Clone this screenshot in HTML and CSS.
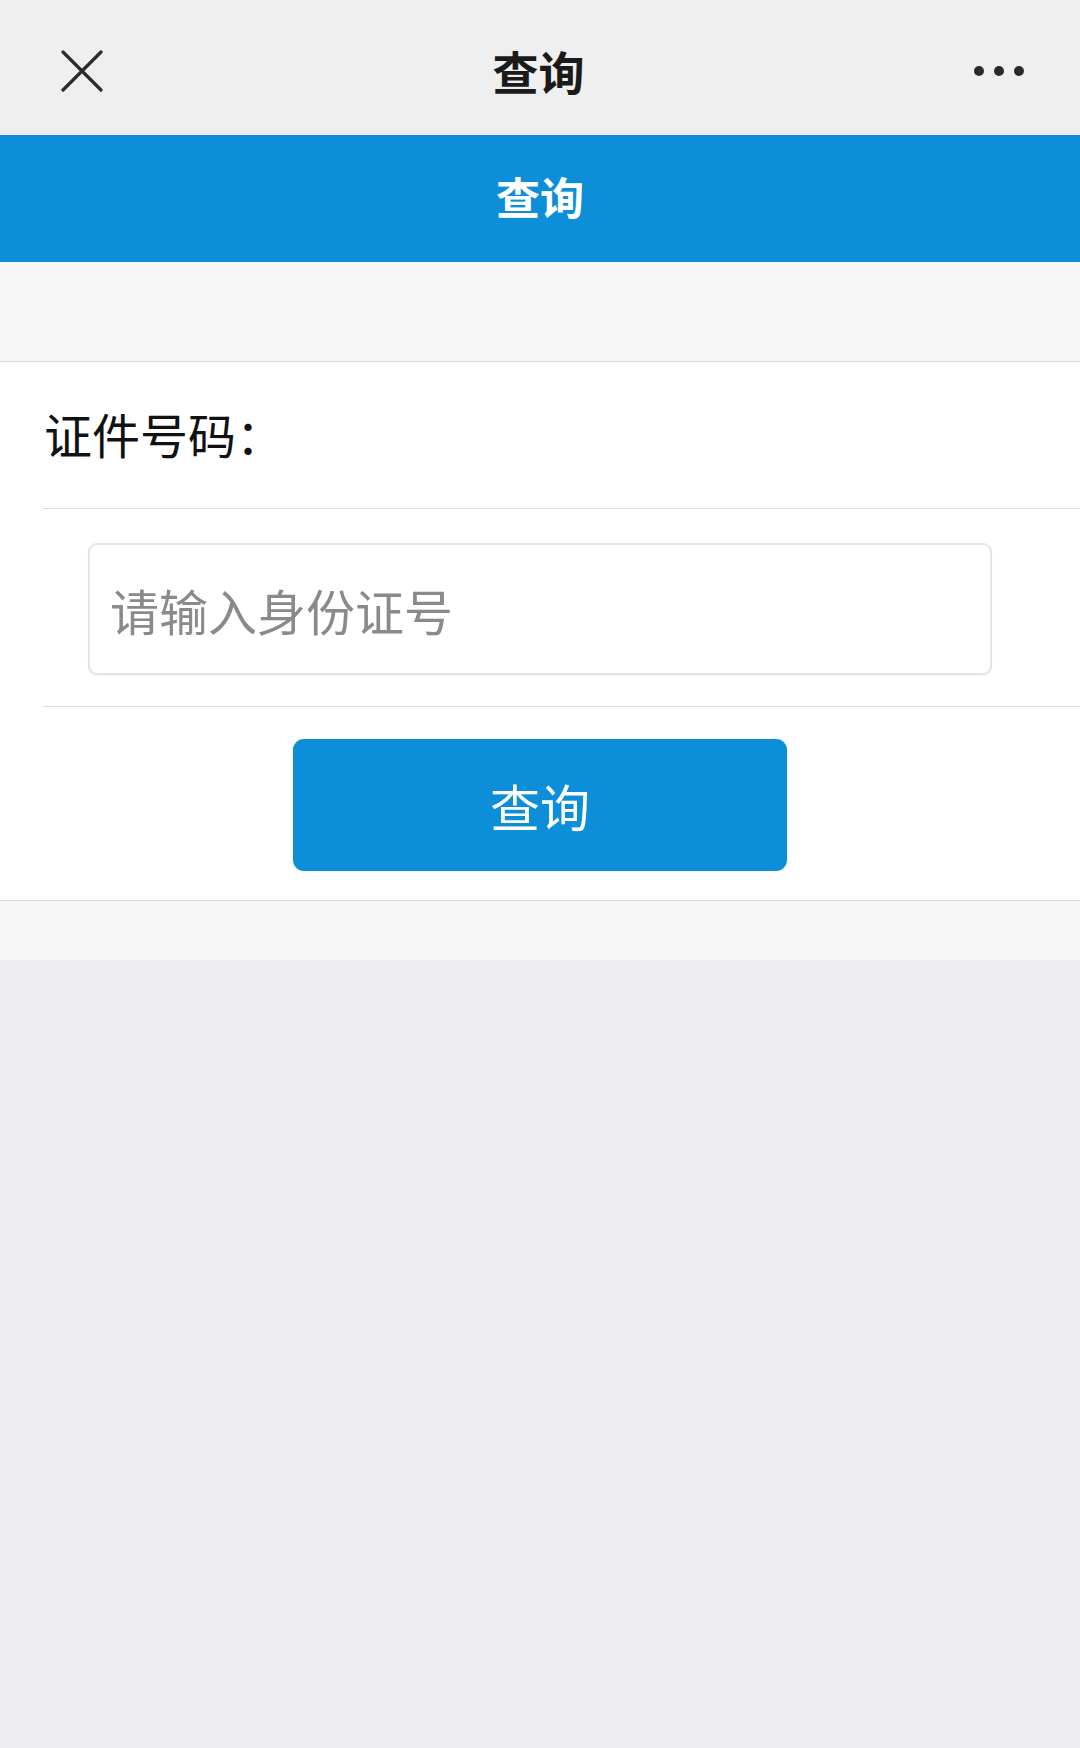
FILE: index.html
```html
<!DOCTYPE html>
<html lang="zh-CN">
<head>
  <meta charset="UTF-8">
  <title>查询</title>
  <link rel="stylesheet" href="styles.css">
</head>
<body>
  <header class="navbar">
    <span class="nav-close">
      <svg width="42" height="42" viewBox="0 0 42 42">
        <path d="M2 2 L40 40 M40 2 L2 40" stroke="#2b2b2b" stroke-width="3.2" stroke-linecap="round" fill="none"/>
      </svg>
    </span>
    <h1 class="nav-title">查询</h1>
    <span class="nav-more">
      <i></i><i></i><i></i>
    </span>
  </header>

  <div class="banner">查询</div>

  <div class="spacer"></div>

  <form class="panel">
    <div class="row row-label">证件号码：</div>
    <div class="row row-input">
      <input type="text" class="id-input" placeholder="请输入身份证号">
    </div>
    <div class="row-button">
      <button type="button" class="btn-query">查询</button>
    </div>
  </form>

  <div class="spacer spacer-bottom"></div>
</body>
</html>
```

FILE: styles.css
```css
body {
  margin: 0;
  background: #eeeef2;
  font-family: "Noto Sans CJK SC", "Noto Sans", sans-serif;
}
.navbar {
  height: 135px;
  background: #efefef;
  display: flex;
  align-items: center;
  justify-content: space-between;
  padding: 0 56px 0 61px;
}
.nav-close {
  width: 42px;
  height: 42px;
  display: flex;
  margin-top: 7px;
}
.nav-title {
  margin: 4px 0 0;
  font-size: 46px;
  font-weight: bold;
  color: #1a1a1a;
  line-height: 1;
}
.nav-more {
  display: flex;
  gap: 10px;
  width: 50px;
  margin-top: 7px;
}
.nav-more i {
  width: 10px;
  height: 10px;
  border-radius: 50%;
  background: #2a2a2a;
}
.banner {
  height: 121px;
  padding-bottom: 6px;
  background: #0c8fd8;
  color: #fff;
  font-size: 44px;
  font-weight: bold;
  display: flex;
  align-items: center;
  justify-content: center;
}
.spacer {
  height: 99px;
  background: #f7f7f7;
}
.spacer-bottom {
  height: 59px;
}
.panel {
  background: #fff;
  border-top: 1px solid #d9d9d9;
  border-bottom: 1px solid #d9d9d9;
  margin: 0;
}
.row {
  margin-left: 43px;
  border-bottom: 1px solid #dadada;
}
.row-label {
  height: 142px;
  padding: 0 0 4px 1px;
  display: flex;
  align-items: center;
  font-size: 48px;
  color: #111;
}
.row-input {
  padding: 34px 88px 31px 45px;
}
.id-input {
  display: block;
  width: 100%;
  height: 132px;
  box-sizing: border-box;
  border: 2px solid #e6e4df;
  border-radius: 9px;
  padding: 0 20px;
  font-family: inherit;
  font-size: 49px;
  color: #333;
  outline: none;
  box-shadow: 0 1px 2px rgba(0, 0, 0, 0.06);
}
.id-input::placeholder {
  color: #8a8a8a;
}
.row-button {
  display: flex;
  justify-content: center;
  padding: 32px 0 29px;
}
.btn-query {
  width: 494px;
  height: 132px;
  border: none;
  border-radius: 11px;
  background: #0c8fd8;
  color: #fff;
  font-family: inherit;
  font-size: 50px;
}
```
